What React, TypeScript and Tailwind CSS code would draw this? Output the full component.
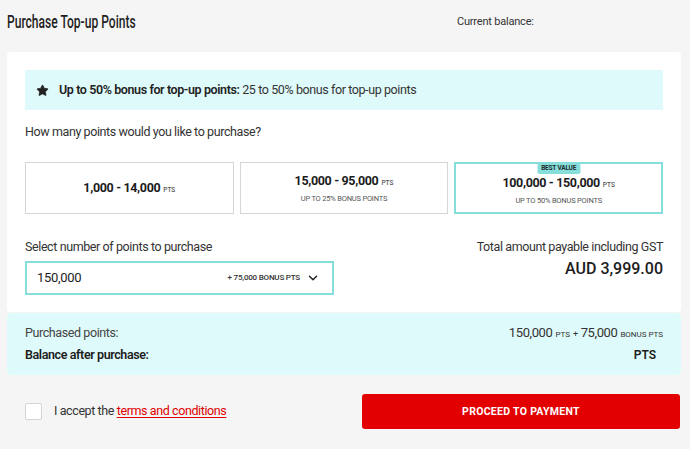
import { ChevronDown, Star } from 'lucide-react';

interface PackOption {
  range: string;
  bonus?: string;
  best?: boolean;
}

const PACKS: PackOption[] = [
  { range: '1,000 - 14,000' },
  { range: '15,000 - 95,000', bonus: 'UP TO 25% BONUS POINTS' },
  { range: '100,000 - 150,000', bonus: 'UP TO 50% BONUS POINTS', best: true },
];

function PackCard({ range, bonus, best }: PackOption) {
  return (
    <div
      className={
        best
          ? 'relative flex h-[52px] flex-col items-center justify-center border-2 border-[#86dedb] bg-white pt-[5px]'
          : 'relative flex h-[52px] flex-col items-center justify-center border border-[#d6d6d6] bg-white'
      }
    >
      {best && (
        <span className="absolute left-1/2 top-[-1px] flex h-[11px] w-[43px] -translate-x-1/2 items-center justify-center rounded-b-[2px] rounded-t-[3px] bg-[#86dedb] text-[6.5px] font-bold tracking-[-0.2px] text-[#1e2b2b]">
          BEST VALUE
        </span>
      )}
      <div className="flex items-baseline gap-[3px] text-[#1c1c1c]">
        <span className="text-[12.5px] font-bold leading-[16px] tracking-[-0.35px]">{range}</span>
        <span className="text-[6.5px] font-medium text-[#555]">PTS</span>
      </div>
      {bonus && (
        <div className="mt-[5px] text-[7.5px] leading-[10px] tracking-[-0.2px] text-[#555]">{bonus}</div>
      )}
    </div>
  );
}

export default function App() {
  return (
    <div className="min-h-screen bg-[#f5f5f5] pl-[7px] pr-[9px] font-['Roboto',sans-serif] text-[#333]">
      <header className="flex h-[42px] items-center">
        <div className="w-[450px]">
          <h1 className="inline-block origin-left scale-x-[0.67] whitespace-nowrap text-[18px] font-medium text-[#1e1e1e]">
            Purchase Top-up Points
          </h1>
        </div>
        <span className="mt-[2px] text-[11px] tracking-[-0.2px] text-[#333]">Current balance:</span>
      </header>

      <section className="mt-[10px] rounded-[4px] bg-white px-[18px] pb-[17px] pt-[18px]">
        <div className="flex h-[40px] items-center gap-[10px] bg-[#dffafa] pl-[11px] text-[12.5px] tracking-[-0.4px] text-[#333]">
          <Star className="h-[13px] w-[13px] fill-[#222] text-[#222]" strokeWidth={1.5} />
          <p>
            <span className="font-semibold text-[#222]">Up to 50% bonus for top-up points:</span> 25 to 50%
            bonus for top-up points
          </p>
        </div>

        <p className="mt-[13px] text-[12.5px] leading-[18px] tracking-[-0.4px]">
          How many points would you like to purchase?
        </p>

        <div className="mt-[21px] grid grid-cols-3 gap-[6px]">
          {PACKS.map((p) => (
            <PackCard key={p.range} {...p} />
          ))}
        </div>

        <div className="mt-[24px] flex items-start justify-between">
          <div className="w-[309px]">
            <label className="block text-[12.5px] leading-[18px] tracking-[-0.4px]">
              Select number of points to purchase
            </label>
            <div className="mt-[5px] flex h-[34px] items-center border-2 border-[#86dedb] pl-[10px] pr-[12px]">
              <span className="flex-1 text-[13px] tracking-[-0.3px] text-[#1c1c1c]">150,000</span>
              <span className="text-[8px] font-medium tracking-[-0.2px] text-[#333]">+ 75,000 BONUS PTS</span>
              <ChevronDown className="ml-[6px] h-[14px] w-[14px] text-[#222]" strokeWidth={2.5} />
            </div>
          </div>
          <div className="text-right">
            <p className="text-[12.5px] leading-[18px] tracking-[-0.4px]">Total amount payable including GST</p>
            <p className="mt-[3px] text-[16px] font-medium leading-[20px] text-[#1c1c1c]">AUD 3,999.00</p>
          </div>
        </div>
      </section>

      <section className="mt-[1px] rounded-[4px] bg-[#dffafa] px-[18px] pb-[10px] pt-[10px] text-[12.5px] leading-[20px] tracking-[-0.4px]">
        <div className="flex justify-between">
          <span className="text-[#444]">Purchased points:</span>
          <span className="flex items-baseline gap-[3px] text-[#333]">
            <span className="text-[13px]">150,000</span>
            <span className="text-[8px] tracking-[0px]">PTS</span>
            <span className="text-[9px]">+</span>
            <span className="text-[13px]">75,000</span>
            <span className="text-[8px] tracking-[0px]">BONUS PTS</span>
          </span>
        </div>
        <div className="flex justify-between font-semibold text-[#1c1c1c]">
          <span>Balance after purchase:</span>
          <span className="mr-[7px] text-[12px] tracking-[0px]">PTS</span>
        </div>
      </section>

      <div className="mt-[19px] flex items-center justify-between pl-[18px]">
        <label className="flex items-center gap-[12px] text-[12.5px] tracking-[-0.4px] text-[#333]">
          <span className="h-[17px] w-[17px] rounded-[2px] border border-[#d4d4d4] bg-white" />
          <span>
            I accept the{' '}
            <a href="#" className="text-[#e00000] underline underline-offset-2">
              terms and conditions
            </a>
          </span>
        </label>
        <button className="mr-[1px] h-[35px] w-[318px] rounded-[3px] bg-[#e30000] text-[10.5px] font-bold tracking-[0.3px] text-white">
          PROCEED TO PAYMENT
        </button>
      </div>
    </div>
  );
}
